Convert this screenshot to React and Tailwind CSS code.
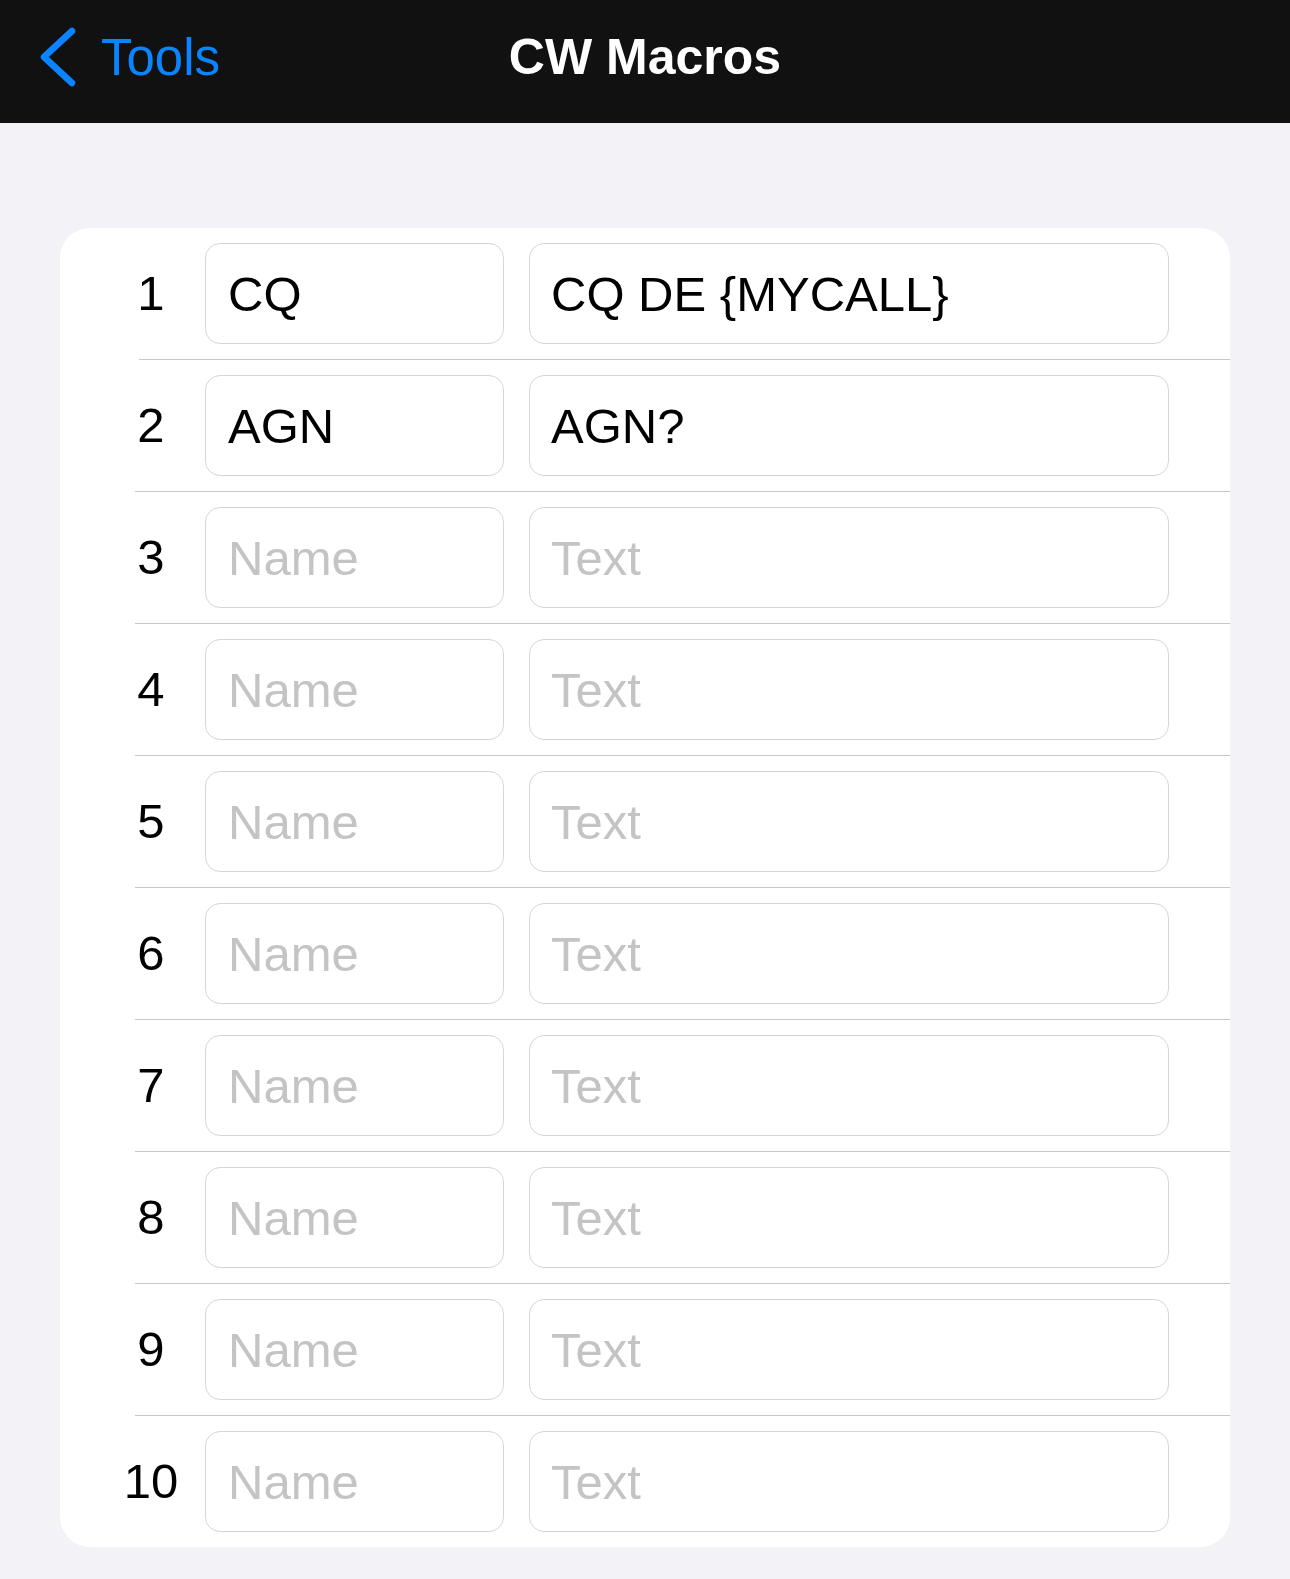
const macros = [
  { name: "CQ", text: "CQ DE {MYCALL}" },
  { name: "AGN", text: "AGN?" },
  { name: "", text: "" },
  { name: "", text: "" },
  { name: "", text: "" },
  { name: "", text: "" },
  { name: "", text: "" },
  { name: "", text: "" },
  { name: "", text: "" },
  { name: "", text: "" },
];

function Header() {
  return (
    <header className="h-[123px] bg-[#111111]">
      <div className="grid h-[114px] grid-cols-[1fr_auto_1fr] items-center">
        <div className="flex items-center pl-[37px]">
          <svg width="42" height="60" viewBox="0 0 42 60" fill="none">
            <path
              d="M35 4 L7 30 L35 56"
              stroke="#0a84ff"
              strokeWidth="6.5"
              strokeLinecap="round"
              strokeLinejoin="round"
            />
          </svg>
          <span className="ml-[22px] text-[51px] leading-none text-[#0a84ff]">Tools</span>
        </div>
        <h1 className="text-[50px] font-bold leading-none text-white">CW Macros</h1>
        <div />
      </div>
    </header>
  );
}

function MacroRow({ index, macro }) {
  return (
    <div className="flex h-[131px] items-center pl-[43px]">
      <div className="w-[96px] text-center text-[49px] leading-none text-black">{index}</div>
      <input
        readOnly
        defaultValue={macro.name}
        placeholder="Name"
        className="ml-[6px] h-[101px] w-[299px] rounded-[15px] border-[1.5px] border-[#d6d6da] bg-white pl-[22px] text-[49px] text-black outline-none placeholder:text-[#c4c4c7]"
      />
      <input
        readOnly
        defaultValue={macro.text}
        placeholder="Text"
        className="ml-[25px] h-[101px] w-[640px] rounded-[15px] border-[1.5px] border-[#d6d6da] bg-white pl-[21px] text-[49px] text-black outline-none placeholder:text-[#c4c4c7]"
      />
    </div>
  );
}

export default function App() {
  return (
    <div className="min-h-screen bg-[#f2f2f7] font-['Liberation_Sans',Arial,sans-serif]">
      <Header />
      <main className="mx-[60px] mt-[105px] rounded-[30px] bg-white">
        {macros.map((m, i) => (
          <div key={i}>
            <MacroRow index={i + 1} macro={m} />
            {i < macros.length - 1 && (
              <div className={`h-px bg-[#c8c8cc] ${i === 0 ? "ml-[79px]" : "ml-[75px]"}`} />
            )}
          </div>
        ))}
      </main>
    </div>
  );
}
